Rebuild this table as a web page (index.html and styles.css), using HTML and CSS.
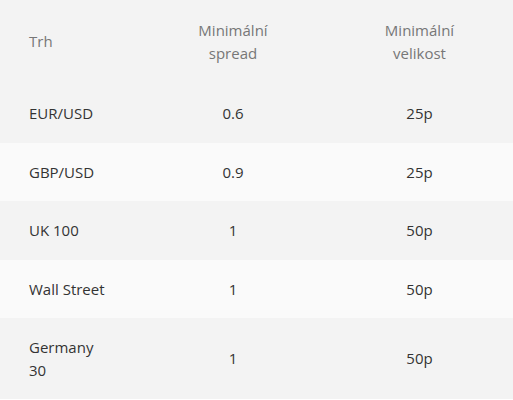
FILE: index.html
```html
<!DOCTYPE html>
<html lang="cs">
<head>
<meta charset="utf-8">
<link rel="stylesheet" href="styles.css">
</head>
<body>
<table class="spreads">
  <colgroup>
    <col class="col-market">
    <col class="col-spread">
    <col class="col-size">
  </colgroup>
  <thead>
    <tr>
      <th class="cell-market">Trh</th>
      <th>Minimální<br>spread</th>
      <th>Minimální<br>velikost</th>
    </tr>
  </thead>
  <tbody>
    <tr><td class="cell-market">EUR/USD</td><td>0.6</td><td>25p</td></tr>
    <tr><td class="cell-market">GBP/USD</td><td>0.9</td><td>25p</td></tr>
    <tr><td class="cell-market">UK 100</td><td>1</td><td>50p</td></tr>
    <tr><td class="cell-market">Wall Street</td><td>1</td><td>50p</td></tr>
    <tr><td class="cell-market">Germany 30</td><td>1</td><td>50p</td></tr>
  </tbody>
</table>
</body>
</html>
```
FILE: styles.css
```css
html, body {
  margin: 0;
  padding: 0;
  background: #ffffff;
}
body {
  font-family: "Open Sans", "Liberation Sans", sans-serif;
  font-size: 15px;
  line-height: 1.5;
  color: #333333;
}
.spreads {
  width: 513px;
  border-collapse: collapse;
  table-layout: fixed;
}
.col-market { width: 140px; }
.col-spread { width: 186px; }
.col-size { width: 187px; }
.spreads th {
  font-weight: 400;
  color: #777777;
  background: #f3f3f3;
  padding: 19px 10px 20px;
  text-align: center;
}
.spreads td {
  padding: 18px 10px;
  text-align: center;
  vertical-align: middle;
}
.spreads tbody tr:nth-child(odd) td { background: #f3f3f3; }
.spreads tbody tr:nth-child(even) td { background: #fafafa; }
.spreads .cell-market {
  text-align: left;
  padding-left: 29px;
  padding-right: 30px;
}
```
